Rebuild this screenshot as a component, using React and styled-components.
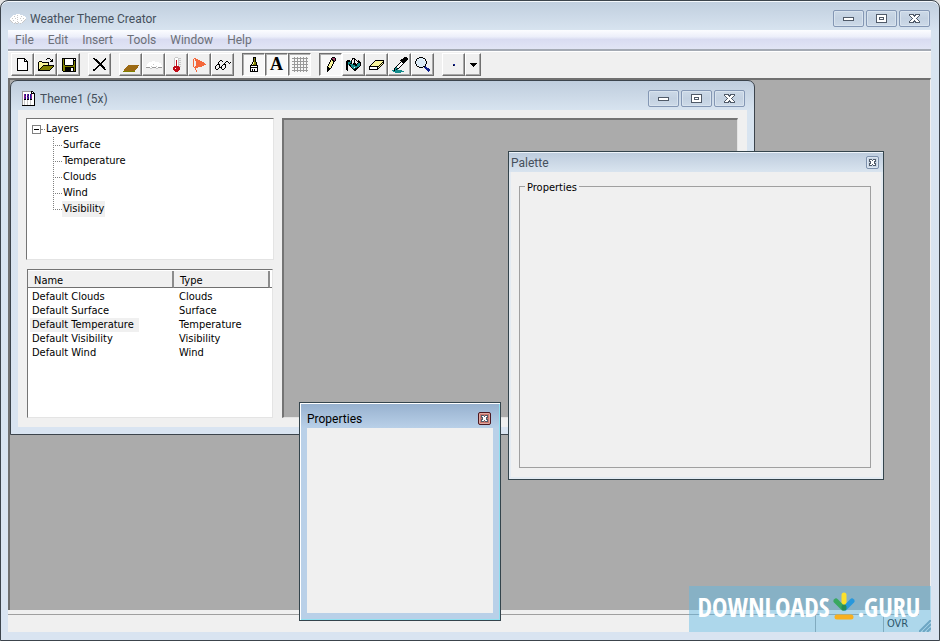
import { useState } from "react";
import styled, { createGlobalStyle } from "styled-components";

const palette = {
  k: "#000000",
  w: "#ffffff",
  y: "#f8f49a",
  o: "#808000",
  b: "#9c6a14",
  g: "#9a9a9a",
  l: "#c8c8c8",
  r: "#c00c18",
  f: "#f4683c",
  t: "#148c8c",
  n: "#10208c",
  c: "#dcecf8",
  p: "#a04068",
  m: "#8c1c8c",
  d: "#505a68",
};

const icons = {
  app: [
    "......wwww......",
    "...wwwwlwwwww...",
    "..wwlwwwwwwlwww.",
    ".wwwwwwlwwwwwwww",
    "wwlwwlwwwwlwwlww",
    "wwwwwwwlwwwwwwwl",
    "lwwlwwwwwwwlwwl.",
    ".lwwwwwlwwwwwl..",
    "..lwwlwwlwwwl...",
    "....l.ll..l.....",
  ],
  theme: [
    "gggggggggkk..",
    "gwwwwwwwwkwk.",
    "gwwwwwwwwkkkk",
    "gwmnwmnwnmwwk",
    "gwmnwmnwnmwwk",
    "gwmmwnmwnmwwk",
    "gwmnwmnwnmwwk",
    "gwmnwmnwnmwwk",
    "gwkkwkkwkkwwk",
    "gwlwwlwwlwwwk",
    "gwlwwlwwlwwwk",
    "gwlwwlwwlwwwk",
    "gwlwwlwwlwwwk",
    "gwlwwlwwlwwwk",
    "kkkkkkkkkkkkk",
  ],
  new: [
    "kkkkkkkk...",
    "kwwwwwwkk..",
    "kwwwwwwkwk.",
    "kwwwwwwkkkk",
    "kwwwwwwwwwk",
    "kwwwwwwwwwk",
    "kwwwwwwwwwk",
    "kwwwwwwwwwk",
    "kwwwwwwwwwk",
    "kwwwwwwwwwk",
    "kwwwwwwwwwk",
    "kwwwwwwwwwk",
    "kkkkkkkkkkk",
  ],
  open: [
    ".........kkk....",
    "........k...k.k.",
    ".............kk.",
    ".kkk........kkk.",
    "kyyykkkkkkk.....",
    "kyyyyyyyyyk.....",
    "kyyyyyyyyyk.....",
    "kyyyykkkkkkkkkkk",
    "kyyykooooooooook",
    "kyykooooooooook.",
    "kykooooooooook..",
    "kkooooooooook...",
    "kkkkkkkkkkkk....",
  ],
  save: [
    "kkkkkkkkkkkkkk",
    "kokwwwwwwwwkwk",
    "kokwwwwwwwwkkk",
    "kokwwwwwwwwkok",
    "kokwwwwwwwwkok",
    "kokwwwwwwwwkok",
    "kokwwwwwwwwkok",
    "kookkkkkkkkook",
    "kooooooooooook",
    "kookkkkkkkkkok",
    "kookkkkkkwwkok",
    "kookkkkkkwwkok",
    "kookkkkkkwwkok",
    ".kkkkkkkkkkkkk",
  ],
  delete: [
    "kk..........k",
    ".kkk.......kk",
    "..kkk.....kk.",
    "...kkk...kk..",
    "....kkk.kk...",
    ".....kkkk....",
    "......kkk....",
    ".....kkkkk...",
    "....kk..kkk..",
    "...kk....kkk.",
    "..kk......kk.",
    "kkk........kk",
    "kk...........",
  ],
  surface: [
    "................",
    "................",
    "................",
    "................",
    "................",
    "................",
    "................",
    ".....bbbbbbbbbbb",
    "....bbbbbbbbbbb.",
    "...bbbbbbbbbbbb.",
    "..bbbbbbbbbbbb..",
    ".bbbbbbbbbbbb...",
    ".bbbbbbbbbbb....",
    "oooooooooooo....",
  ],
  clouds: [
    "................",
    "......www.......",
    "...wwwwwwwwww...",
    "..wwwwwwwwwwwww.",
    ".wwwwwwlwwwwwww.",
    ".wwwwwwwwwwwwwww",
    "wwwwwlwwwwlwwwww",
    "ggggwwggggwwgggg",
    "....ll....ll....",
  ],
  temperature: [
    "..lll...",
    ".lwwwlll",
    ".lwwwl..",
    ".lwrwlll",
    ".lwrwl..",
    ".lwrwlll",
    ".lwrwl..",
    ".lwrwlll",
    ".lwrwl..",
    ".rrrrrll",
    "rrrrrrr.",
    "rrwrrrr.",
    "rrrrrrr.",
    ".rrrrr..",
    "..rrr...",
  ],
  wind: [
    ".ff..........",
    "f.fff........",
    "f.fffff......",
    "f..ffffff....",
    "f..ffffffff..",
    "f..fffffffff.",
    "f..ffffffffff",
    "f..ffffffff..",
    "f.fffffff....",
    ".ffff........",
    "..f..........",
    "..f..........",
    "...f.........",
    "...f.........",
  ],
  visibility: [
    ".....kk.........",
    "....k..k...kk...",
    "...k......k..k.k",
    "...k.....k....k.",
    "..kkk...kkk.....",
    ".k..k..k..k.....",
    "k...k.k...k.....",
    "k...kkk...k.....",
    "k..k..k..k......",
    ".kk....kk.......",
  ],
  brush: [
    "....kkk...",
    "....kok...",
    "....kok...",
    "....kok...",
    "....kok...",
    "...kyook..",
    "...kyook..",
    "..kyoook..",
    ".kkkkkkkk.",
    ".kwwwwwwk.",
    ".kkkkkkkk.",
    ".kwwwwwwk.",
    ".kwkwkwwk.",
    ".kwkwkwwk.",
    ".kkkkkkkk.",
  ],
  grid: [
    "..g..g..g..g..g.",
    "gggggggggggggggg",
    "..g..g..g..g..g.",
    "..g..g..g..g..g.",
    "gggggggggggggggg",
    "..g..g..g..g..g.",
    "..g..g..g..g..g.",
    "gggggggggggggggg",
    "..g..g..g..g..g.",
    "..g..g..g..g..g.",
    "gggggggggggggggg",
    "..g..g..g..g..g.",
    "..g..g..g..g..g.",
    "gggggggggggggggg",
    "..g..g..g..g..g.",
  ],
  pencil: [
    "......kkk.",
    ".....kpppk",
    ".....kkppk",
    "....kykkpk",
    "....kyykk.",
    "...kyyyk..",
    "...kyyyk..",
    "..kyyyk...",
    "..kyyyk...",
    ".kyyyk....",
    ".kkyyk....",
    ".kkkk.....",
    ".kkk......",
    ".kk.......",
    ".k........",
  ],
  bucket: [
    "......kkk......",
    "......k.kk.....",
    ".kkk.k..k.k.k..",
    "kkkktk..k..kkk.",
    "kktttk..k...kkk",
    "kkttkk.kkk.kttk",
    "kktktttkkkktttk",
    "kk.kkttttkktttk",
    "kk..kttttttttk.",
    "kk...kttwttkk..",
    "kk....kttkkk...",
    "kk.....kkkk....",
    ".k......kk.....",
  ],
  eraser: [
    "......kkkkkkkkk",
    ".....kyyyyyyyyk",
    "....kyyyyyyyykk",
    "...kyyyyyyyykyk",
    "..kyyyyyyyykyk.",
    ".kyyyyyyyykyk..",
    "kkkkkkkkkkyk...",
    "kwwwwwwwkyk....",
    "kwwwwwwwkk.....",
    "kkkkkkkkk......",
  ],
  picker: [
    "............kkk.",
    "...........kkkkk",
    ".........kkkkkkk",
    "........kkkkkkk.",
    ".........kkkkk..",
    "........kwkkk...",
    ".......kwwwk....",
    "......kwwwk.....",
    ".....kwwwk......",
    "....kwwwk.......",
    "...ktwwk........",
    "..kttkk.........",
    "..ktkt..........",
    "ttkttttttt......",
    ".ttttttttttt....",
    "...tttttt.......",
  ],
  zoom: [
    "....kkkk.......",
    "..kkcccckk.....",
    ".kccccccwck....",
    ".kcccccccwk....",
    "kcccccccccck...",
    "kcccccccccck...",
    "kcccccccccck...",
    ".kcccccccck....",
    ".kwccccccck....",
    "..kkcccckkn....",
    "....kkkk.nnn...",
    "..........nnnn.",
    "...........nnnn",
    "............nnn",
    ".............n.",
  ],
  arrow: ["kkkkkkk", ".kkkkk.", "..kkk..", "...k..."],
  dot: ["nn", "kn"],
  minimize: ["ddddddddddd", "dwwwwwwwwwd", "dwwwwwwwwwd", "ddddddddddd"],
  maximize: [
    "ddddddddddd",
    "dwwwwwwwwwd",
    "dwwwwwwwwwd",
    "dwwdddddwwd",
    "dwwdwwwdwwd",
    "dwwdddddwwd",
    "dwwwwwwwwwd",
    "dwwwwwwwwwd",
    "ddddddddddd",
  ],
  close: [
    "ddddd.ddddd",
    "dwwwdddwwwd",
    ".dwwwdwwwd.",
    "..dwwwwwd..",
    "...dwwwd...",
    "..dwwwwwd..",
    ".dwwwdwwwd.",
    "dwwwdddwwwd",
    "ddddd.ddddd",
  ],
  smallClose: [
    "ddd.ddd",
    "dwwdwwd",
    "ddwwwdd",
    ".dwwwd.",
    "ddwwwdd",
    "dwwdwwd",
    "ddd.ddd",
  ],
};

const PixelIcon = ({ name }) => {
  const rows = icons[name];
  const width = rows[0].length;
  return (
    <svg
      width={width}
      height={rows.length}
      viewBox={`0 0 ${width} ${rows.length}`}
      shapeRendering="crispEdges"
      aria-hidden="true"
    >
      {rows.map((row, y) =>
        row
          .split("")
          .map((char, x) =>
            char === "." ? null : (
              <rect
                key={`${x}-${y}`}
                x={x}
                y={y}
                width="1"
                height="1"
                fill={palette[char]}
              />
            )
          )
      )}
    </svg>
  );
};

const menus = ["File", "Edit", "Insert", "Tools", "Window", "Help"];
const layers = ["Surface", "Temperature", "Clouds", "Wind", "Visibility"];
const themes = ["Clouds", "Surface", "Temperature", "Visibility", "Wind"];

const toolGroups = [
  ["new", "open", "save"],
  ["delete"],
  ["surface", "clouds", "temperature", "wind", "visibility"],
  ["brush", "text", "grid"],
  ["pencil", "bucket", "eraser", "picker", "zoom"],
];

const WindowControls = () => (
  <Controls>
    <ControlButton aria-label="Minimize">
      <PixelIcon name="minimize" />
    </ControlButton>
    <ControlButton aria-label="Maximize">
      <PixelIcon name="maximize" />
    </ControlButton>
    <ControlButton aria-label="Close">
      <PixelIcon name="close" />
    </ControlButton>
  </Controls>
);

const Toolbar = () => {
  const [toggles, setToggles] = useState(["brush", "text", "grid"]);
  const [tool, setTool] = useState("pencil");

  const handleClick = (group, name) => {
    if (group === 3) {
      setToggles(
        toggles.includes(name)
          ? toggles.filter((t) => t !== name)
          : [...toggles, name]
      );
    } else if (group === 4) {
      setTool(name);
    }
  };

  return (
    <ToolbarWrapper>
      {toolGroups.map((group, i) => (
        <ToolGroup key={i}>
          {group.map((name) => (
            <ToolButton
              key={name}
              aria-label={name}
              $pressed={toggles.includes(name) || tool === name}
              onClick={() => handleClick(i, name)}
            >
              {name === "text" ? <Letter>A</Letter> : <PixelIcon name={name} />}
            </ToolButton>
          ))}
        </ToolGroup>
      ))}
      <ToolGroup>
        <ToolButton aria-label="Brush size">
          <PixelIcon name="dot" />
        </ToolButton>
        <ToolButton aria-label="Choose brush size" $narrow>
          <PixelIcon name="arrow" />
        </ToolButton>
      </ToolGroup>
    </ToolbarWrapper>
  );
};

const LayerTree = () => {
  const [open, setOpen] = useState(true);

  return (
    <TreePane>
      <TreeRoot>
        <Expander aria-label="Toggle layers" onClick={() => setOpen(!open)}>
          <svg width="7" height="7" shapeRendering="crispEdges">
            <rect x="1" y="3" width="5" height="1" fill="#000" />
            {!open && <rect x="3" y="1" width="1" height="5" fill="#000" />}
          </svg>
        </Expander>
        <Dots />
        Layers
      </TreeRoot>
      {open && (
        <TreeList>
          {layers.map((layer) => (
            <TreeItem key={layer}>
              <TreeLabel $selected={layer === "Visibility"}>{layer}</TreeLabel>
            </TreeItem>
          ))}
        </TreeList>
      )}
    </TreePane>
  );
};

const ThemeList = () => (
  <ListPane>
    <ListTable>
      <colgroup>
        <NameCol />
        <TypeCol />
        <col />
      </colgroup>
      <thead>
        <tr>
          <HeadCell>Name</HeadCell>
          <HeadCell>Type</HeadCell>
          <td />
        </tr>
      </thead>
      <tbody>
        {themes.map((type) => (
          <tr key={type}>
            <Cell>
              <CellLabel $selected={type === "Temperature"}>
                Default {type}
              </CellLabel>
            </Cell>
            <TypeCell>{type}</TypeCell>
          </tr>
        ))}
      </tbody>
    </ListTable>
  </ListPane>
);

const App = () => {
  return (
    <>
      <GlobalStyle />
      <MainWindow>
        <TitleBar>
          <TitleIcon>
            <PixelIcon name="app" />
          </TitleIcon>
          <Title>Weather Theme Creator</Title>
          <WindowControls />
        </TitleBar>
        <Client>
          <MenuBar>
            {menus.map((menu) => (
              <MenuButton key={menu}>{menu}</MenuButton>
            ))}
          </MenuBar>
          <Toolbar />
          <Workspace>
            <ThemeWindow>
              <TitleBar>
                <TitleIcon>
                  <PixelIcon name="theme" />
                </TitleIcon>
                <Title>Theme1 (5x)</Title>
                <WindowControls />
              </TitleBar>
              <ThemeBody>
                <SideColumn>
                  <LayerTree />
                  <ThemeList />
                </SideColumn>
                <Canvas />
              </ThemeBody>
            </ThemeWindow>
            <PaletteWindow>
              <PaletteTitle>
                <Title>Palette</Title>
                <SmallClose aria-label="Close palette">
                  <PixelIcon name="smallClose" />
                </SmallClose>
              </PaletteTitle>
              <PaletteBody>
                <Group>
                  <legend>Properties</legend>
                </Group>
              </PaletteBody>
            </PaletteWindow>
            <PropertiesWindow>
              <PropertiesTitle>
                <Title>Properties</Title>
                <SmallClose aria-label="Close properties" $active>
                  <PixelIcon name="smallClose" />
                </SmallClose>
              </PropertiesTitle>
              <PropertiesBody />
            </PropertiesWindow>
          </Workspace>
          <StatusBar>
            <StatusCell $grow />
            <StatusCell />
            <StatusText>OVR</StatusText>
            <svg width="12" height="12" viewBox="0 0 12 12">
              <path
                d="M0 12L12 0M4 12L12 4M8 12L12 8"
                stroke="#7c98a8"
                strokeWidth="2"
              />
            </svg>
          </StatusBar>
        </Client>
        <Watermark>
          DOWNLOADS
          <svg width="22" height="30" viewBox="0 0 22 30" aria-hidden="true">
            <g fill="none" strokeLinecap="round" strokeWidth="5">
              <path d="M11 3V15" stroke="#fde02c" />
              <path d="M3 9L10 16" stroke="#38a860" />
              <path d="M19 9L12 16" stroke="#2898dc" />
              <path d="M11 15V16" stroke="#288c58" />
              <path d="M4 25H18" stroke="#f8b020" />
            </g>
          </svg>
          .GURU
        </Watermark>
      </MainWindow>
    </>
  );
};

export default App;

const GlobalStyle = createGlobalStyle`
  * {
    box-sizing: border-box;
  }

  body {
    margin: 0;
    background: #e4e4e4;
    color: #000;
    font-family: Roboto, "Open Sans", sans-serif;
    font-size: 12px;
  }

  button {
    padding: 0;
    font: inherit;
  }

  svg {
    display: block;
    flex: none;
  }
`;

const MainWindow = styled.div`
  position: relative;
  display: flex;
  flex-direction: column;
  height: 100vh;
  padding: 0 8px 8px 7px;
  border: 1px solid #3c444c;
  border-radius: 8px 8px 0 0;
  background: linear-gradient(#c0cede, #d8e4f0 30px, #d9e4f1);
  box-shadow: inset 0 1px #f4f8fc;
`;

const TitleBar = styled.header`
  display: flex;
  align-items: center;
  height: 29px;
  padding: 6px 1px 0 0;
`;

const TitleIcon = styled.span`
  display: flex;
  justify-content: center;
  width: 20px;
  margin-right: 2px;
`;

const Title = styled.span`
  flex: 1;
  color: #45505c;
  line-height: 16px;
`;

const Controls = styled.div`
  display: flex;
  gap: 2px;
`;

const ControlButton = styled.button`
  display: flex;
  align-items: center;
  justify-content: center;
  width: 31px;
  height: 17px;
  border: 1px solid #8497b4;
  border-radius: 2px;
  background: linear-gradient(#ccd9e7, #c3d1e1 50%, #cddae8);
  box-shadow: inset 0 0 0 1px #d8e3ee;
`;

const Client = styled.main`
  display: flex;
  flex: 1;
  flex-direction: column;
  min-height: 0;
  background: #f0f0f0;
`;

const MenuBar = styled.nav`
  display: flex;
  height: 21px;
  border-bottom: 2px solid #a4aab4;
  background: linear-gradient(#fcfdff, #eceffa 35%, #d9dcf1 50%, #e1e5f5);
`;

const MenuButton = styled.button`
  height: 19px;
  padding: 0 7px;
  border: none;
  background: transparent;
  color: #6c7078;
`;

const ToolbarWrapper = styled.div`
  display: flex;
  gap: 8px;
  height: 27px;
  padding: 1px 3px 3px;
  border-top: 1px solid #fff;
`;

const ToolGroup = styled.div`
  display: flex;
`;

const ToolButton = styled.button`
  display: flex;
  align-items: center;
  justify-content: center;
  width: ${(props) => (props.$narrow ? "16px" : "23px")};
  height: 23px;
  border: 1px solid;
  border-color: ${(props) =>
    props.$pressed ? "#707070 #fff #fff #707070" : "#fff #707070 #707070 #fff"};
  background: ${(props) => (props.$pressed ? "#f8f8f8" : "#f0f0f0")};
  box-shadow: ${(props) =>
    props.$pressed ? "inset 1px 1px #b0b0b0" : "inset -1px -1px #a8a8a8"};
`;

const Letter = styled.span`
  font: bold 18px "Liberation Serif", serif;
`;

const Workspace = styled.section`
  position: relative;
  flex: 1;
  border: solid #707070;
  border-width: 2px 0 0 2px;
  border-right: 1px solid #f0f0f0;
  background: #ababab;
`;

/* windows float freely over the workspace */
const ThemeWindow = styled.section`
  position: absolute;
  top: 0;
  left: 0;
  display: flex;
  flex-direction: column;
  width: 745px;
  height: 355px;
  padding: 0 7px 7px;
  border: 1px solid #3c444c;
  border-radius: 7px 7px 0 0;
  background: linear-gradient(#bfcddd, #d8e4f0 30px, #d9e4f1);

  ${Controls} {
    margin-right: 1px;
  }
`;

const ThemeBody = styled.div`
  display: flex;
  flex: 1;
  gap: 8px;
  min-height: 0;
  padding: 8px 9px 9px 8px;
  background: #f0f0f0;
  font-family: "DejaVu Sans Condensed", "Noto Sans", sans-serif;
  font-size: 11px;
`;

const SideColumn = styled.div`
  display: flex;
  flex-direction: column;
  gap: 9px;
  width: 248px;
`;

const Pane = styled.div`
  border: 1px solid;
  border-color: #747474 #e4e4e4 #e4e4e4 #747474;
  background: #fff;
`;

const TreePane = styled(Pane)`
  height: 142px;
  padding: 2px 5px;
  line-height: 16px;
`;

const TreeRoot = styled.div`
  display: flex;
  align-items: center;
`;

const Expander = styled.button`
  display: flex;
  width: 9px;
  height: 9px;
  align-items: center;
  justify-content: center;
  border: 1px solid #808080;
  background: #fff;
`;

const Dots = styled.span`
  width: 4px;
  margin-right: 1px;
  border-top: 1px dotted #808080;
`;

const TreeList = styled.ul`
  margin: 0;
  padding: 0 0 0 21px;
  list-style: none;
`;

const TreeItem = styled.li`
  display: flex;
  align-items: center;
  height: 16px;
  background: repeating-linear-gradient(#808080 0 1px, transparent 1px 2px) 0 0 /
    1px 100% no-repeat;

  &::before {
    content: "";
    width: 9px;
    height: 1px;
    background: repeating-linear-gradient(
      90deg,
      #808080 0 1px,
      transparent 1px 2px
    );
  }

  &:last-child {
    background-size: 1px 8px;
  }
`;

const TreeLabel = styled.span`
  padding: 0 1px;
  background: ${(props) => (props.$selected ? "#f0f0f0" : "transparent")};
`;

const ListPane = styled(Pane)`
  flex: 1;
  margin: 0 1px;
  padding-top: 1px;
`;

const ListTable = styled.table`
  width: 100%;
  border-collapse: separate;
  border-spacing: 0;
  table-layout: fixed;
  line-height: 14px;

  td,
  th {
    padding: 0;
  }

  thead td {
    border-bottom: 1px solid #707070;
  }

  tbody::before {
    content: "";
    display: block;
    height: 2px;
  }
`;

const NameCol = styled.col`
  width: 146px;
`;

const TypeCol = styled.col`
  width: 96px;
`;

const HeadCell = styled.th`
  && {
    height: 17px;
    padding: 3px 0 0 6px;
  }
  border-right: 2px solid #8c8c8c;
  border-bottom: 1px solid #707070;
  background: #f0f0f0;
  font-weight: normal;
  line-height: 13px;
  text-align: left;
`;

const Cell = styled.td`
  height: 14px;
`;

const TypeCell = styled(Cell)`
  && {
    padding-left: 5px;
  }
`;

const CellLabel = styled.span`
  display: block;
  width: fit-content;
  margin-left: 2px;
  padding: 0 5px 0 2px;
  background: ${(props) => (props.$selected ? "#f0f0f0" : "transparent")};
`;

const Canvas = styled(Pane)`
  flex: 1;
  border-width: 2px 1px 1px 2px;
  background: #ababab;
`;

const ToolWindow = styled.section`
  position: absolute;
  display: flex;
  flex-direction: column;
  border: 1px solid #34444c;
`;

const PaletteWindow = styled(ToolWindow)`
  top: 71px;
  left: 498px;
  width: 376px;
  height: 329px;
  padding: 0 2px 2px;
  background: #e4ebf2;
`;

const PaletteTitle = styled.header`
  display: flex;
  align-items: center;
  height: 20px;
  margin: 0 -2px;
  padding: 1px 4px 0 2px;
  background: linear-gradient(#bccbdc, #d9e4ef);
  box-shadow: inset 0 1px #eef4fa;
`;

const SmallClose = styled.button`
  display: flex;
  align-items: center;
  justify-content: center;
  width: 13px;
  height: 13px;
  border: 1px solid ${(props) => (props.$active ? "#4c1820" : "#7c90ac")};
  border-radius: 2px;
  background: ${(props) => (props.$active ? "#c8766e" : "#c8d6e6")};
  box-shadow: inset 0 0 0 1px
    ${(props) => (props.$active ? "#e0a8a0" : "#dce6f0")};
`;

const PaletteBody = styled.div`
  display: flex;
  flex: 1;
  padding: 5px 10px 8px;
  background: #f0f0f0;
`;

const Group = styled.fieldset`
  flex: 1;
  min-width: 0;
  margin: 0 0 1px -2px;
  padding: 0 5px;
  border: 1px solid #a0a0a0;
  font-family: "DejaVu Sans Condensed", "Noto Sans", sans-serif;
  font-size: 11px;
  line-height: 14px;

  legend {
    padding: 4px 2px 0;
  }
`;

const PropertiesWindow = styled(ToolWindow)`
  top: 322px;
  left: 289px;
  width: 202px;
  height: 219px;
  padding: 0 7px 7px;
  background: linear-gradient(#96b0ce, #b9d0e8 25px, #b9d0e8);
  box-shadow: inset 1px 1px #fff, inset -1px -1px #90e0f0;
`;

const PropertiesTitle = styled.header`
  display: flex;
  align-items: center;
  height: 25px;
  padding: 6px 2px 0 0;

  ${Title} {
    color: #000;
  }
`;

const PropertiesBody = styled.div`
  flex: 1;
  background: #f0f0f0;
`;

const StatusBar = styled.footer`
  display: flex;
  align-items: flex-end;
  height: 22px;
  padding-top: 3px;
  border-top: 1px solid #f0f0f0;
`;

const StatusCell = styled.div`
  flex: ${(props) => (props.$grow ? "1" : "0 0 68px")};
  height: 18px;
  border: solid #a0a0a0;
  border-width: 1px 1px 0 0;
`;

const StatusText = styled.div`
  width: 35px;
  height: 18px;
  padding-left: 3px;
  border-top: 1px solid #a0a0a0;
  font-family: "DejaVu Sans Condensed", "Noto Sans", sans-serif;
  font-size: 11px;
  line-height: 18px;
`;

const Watermark = styled.div`
  position: absolute;
  right: 8px;
  bottom: 8px;
  display: flex;
  align-items: center;
  justify-content: center;
  gap: 3px;
  width: 242px;
  height: 46px;
  padding: 0 2px 4px 0;
  background: rgba(92, 184, 228, 0.45);
  color: #fff;
  font: bold 26px/36px "Open Sans Condensed", "Roboto Condensed", Roboto,
    sans-serif;
`;
